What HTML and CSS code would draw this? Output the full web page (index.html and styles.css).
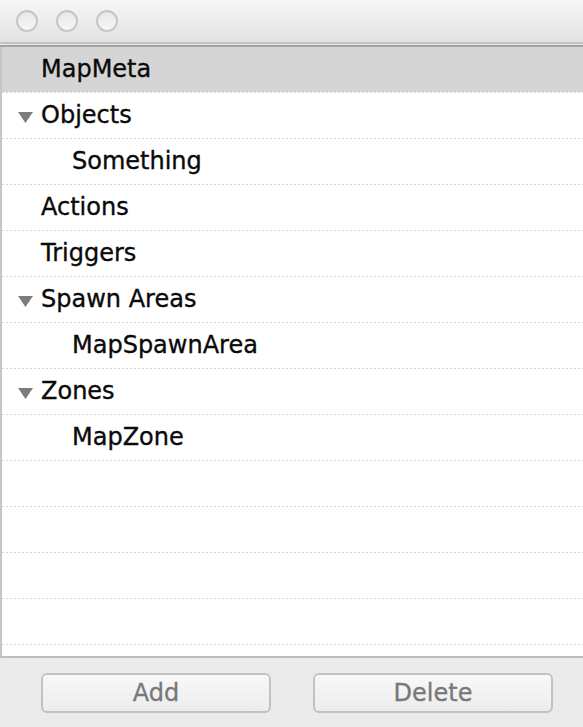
FILE: index.html
```html
<!DOCTYPE html>
<html>
<head>
<meta charset="utf-8">
<link rel="stylesheet" href="styles.css">
</head>
<body>
<div class="window">
  <div class="titlebar">
    <span class="light"></span>
    <span class="light"></span>
    <span class="light"></span>
  </div>
  <div class="sep"></div>
  <div class="list">
    <div class="row selected">MapMeta</div>
    <div class="row parent"><svg class="twisty" width="15" height="11" viewBox="0 0 15 11"><path d="M0 0 H15 L7.5 11 Z" fill="#7c7c7c"/></svg>Objects</div>
    <div class="row child">Something</div>
    <div class="row">Actions</div>
    <div class="row">Triggers</div>
    <div class="row parent"><svg class="twisty" width="15" height="11" viewBox="0 0 15 11"><path d="M0 0 H15 L7.5 11 Z" fill="#7c7c7c"/></svg>Spawn Areas</div>
    <div class="row child">MapSpawnArea</div>
    <div class="row parent"><svg class="twisty" width="15" height="11" viewBox="0 0 15 11"><path d="M0 0 H15 L7.5 11 Z" fill="#7c7c7c"/></svg>Zones</div>
    <div class="row child">MapZone</div>
    <div class="row"></div>
    <div class="row"></div>
    <div class="row"></div>
    <div class="row"></div>
  </div>
  <div class="footer">
    <button class="btn btn-add">Add</button>
    <button class="btn btn-delete">Delete</button>
  </div>
</div>
</body>
</html>
```

FILE: styles.css
```css
html, body {
  margin: 0;
  padding: 0;
  height: 100%;
}
body {
  font-family: "DejaVu Sans", "Liberation Sans", sans-serif;
  background: #ebebeb;
}
.window {
  width: 583px;
  height: 727px;
  display: flex;
  flex-direction: column;
  overflow: hidden;
}
.titlebar {
  height: 42px;
  box-sizing: border-box;
  background: linear-gradient(#f7f7f7, #e2e2e2);
  display: flex;
  align-items: flex-start;
  padding: 10px 0 0 16px;
  gap: 18px;
}
.light {
  width: 22px;
  height: 22px;
  box-sizing: border-box;
  border-radius: 50%;
  border: 2px solid #c6c6c6;
  background: linear-gradient(#e8e8e8, #f6f6f6);
}
.sep {
  height: 5px;
  box-sizing: border-box;
  border-top: 2px solid #c4c4c4;
  border-bottom: 2px solid #a3a3a3;
  background: #e4e4e4;
}
.list {
  height: 611px;
  box-sizing: border-box;
  background: #fff;
  border-left: 2px solid #c6c6c6;
  border-bottom: 2px solid #bdbdbd;
  display: flex;
  flex-direction: column;
}
.row {
  flex: none;
  height: 46px;
  line-height: 45px;
  box-sizing: border-box;
  padding-left: 39px;
  font-size: 24px;
  color: #0a0a0a;
  -webkit-text-stroke: 0.35px #0a0a0a;
  white-space: nowrap;
  background-color: #fff;
  background-image: linear-gradient(to right, #d6d6d6 2px, transparent 2px);
  background-size: 4px 1px;
  background-position: left bottom;
  background-repeat: repeat-x;
}
.row.selected {
  background-image:
    linear-gradient(to right, #d6d6d6 2px, transparent 2px),
    linear-gradient(#d5d5d5, #d5d5d5);
  background-size: 4px 1px, 100% 45px;
  background-position: left bottom, left top;
  background-repeat: repeat-x, no-repeat;
}
.row.parent {
  padding-left: 16px;
}
.row.child {
  padding-left: 70px;
}
.twisty {
  display: inline-block;
  vertical-align: baseline;
  margin-right: 8px;
}
.footer {
  flex: 1;
  display: flex;
  align-items: flex-start;
  padding: 15px 0 0 41px;
  gap: 42px;
  background: #ebebeb;
}
.btn {
  height: 40px;
  box-sizing: border-box;
  border: 2px solid #c2c2c2;
  border-radius: 6px;
  background: linear-gradient(#f8f8f8, #ececec);
  font-family: "DejaVu Sans", "Liberation Sans", sans-serif;
  font-size: 24px;
  color: #787878;
  -webkit-text-stroke: 0.3px #787878;
  padding: 0;
  line-height: 34px;
}
.btn-add {
  width: 230px;
}
.btn-delete {
  width: 240px;
}
```
